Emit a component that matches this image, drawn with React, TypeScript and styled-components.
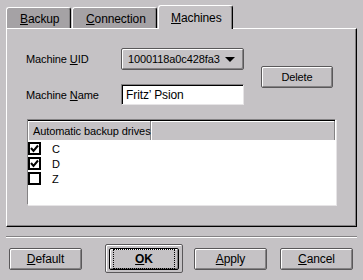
import * as React from 'react';
import styled, { createGlobalStyle } from 'styled-components';

const GlobalStyle = createGlobalStyle`
  html, body {
    margin: 0;
    padding: 0;
    background: #c5c2c5;
  }
`;

const Window = styled.div`
  width: 363px;
  height: 280px;
  background: #c5c2c5;
  font-family: 'Liberation Sans', Arial, sans-serif;
  font-size: 11px;
  letter-spacing: -0.1px;
  color: #000;
  overflow: hidden;
`;

const TabBar = styled.div`
  display: flex;
  align-items: flex-end;
  height: 28px;
  padding-left: 6px;
  gap: 1px;
  box-sizing: border-box;
`;

const Tab = styled.div<{ $active?: boolean; $width: number }>`
  position: relative;
  z-index: ${({ $active }) => ($active ? 1 : 0)};
  box-sizing: border-box;
  width: ${({ $width }) => $width}px;
  height: ${({ $active }) => ($active ? 24 : 21)}px;
  margin-bottom: ${({ $active }) => ($active ? -1 : 0)}px;
  background: ${({ $active }) => ($active ? '#c5c2c5' : '#a5a2a5')};
  border-top: 1px solid #fff;
  border-left: 1px solid #fff;
  border-right: 1px solid #000;
  border-radius: 3px 3px 0 0;
  box-shadow: inset -1px 0 0 #848284;
  display: flex;
  align-items: center;
  font-size: 12px;
  padding-left: ${({ $active }) => ($active ? 12 : 13)}px;
  padding-top: ${({ $active }) => ($active ? 0 : 1)}px;
`;

const Panel = styled.div`
  box-sizing: border-box;
  margin: 0 6px;
  height: 199px;
  border-top: 1px solid #fff;
  border-left: 1px solid #fff;
  border-right: 1px solid #000;
  border-bottom: 1px solid #000;
  box-shadow: inset -1px -1px 0 #848284;
  padding: 19px 0 0 19px;
`;

const Form = styled.div`
  display: grid;
  grid-template-columns: 95px 123px auto;
  grid-template-rows: 22px 21px;
  row-gap: 14px;
  align-items: center;
`;

const Label = styled.div`
  white-space: nowrap;
`;

const Combo = styled.div`
  box-sizing: border-box;
  height: 22px;
  border: 1px solid #5a585a;
  border-radius: 2px;
  box-shadow: inset 1px 1px 0 #fff, inset -1px -1px 0 #848284;
  display: flex;
  align-items: center;
  justify-content: space-between;
  padding: 0 8px 0 6px;
`;

const Arrow = styled.span`
  width: 0;
  height: 0;
  border-left: 5px solid transparent;
  border-right: 5px solid transparent;
  border-top: 5px solid #000;
`;

const TextInput = styled.div`
  box-sizing: border-box;
  height: 21px;
  background: #fff;
  border-top: 1px solid #848284;
  border-left: 1px solid #848284;
  border-right: 1px solid #e6e4e6;
  border-bottom: 1px solid #e6e4e6;
  box-shadow: inset 1px 1px 0 #000;
  display: flex;
  align-items: center;
  padding-left: 4px;
  font-size: 12px;
`;

const Button = styled.div<{ $width?: number }>`
  box-sizing: border-box;
  width: ${({ $width }) => $width ?? 73}px;
  height: 22px;
  border: 1px solid #5a585a;
  border-radius: 2px;
  box-shadow: inset 1px 1px 0 #fff, inset -1px -1px 0 #848284;
  display: flex;
  align-items: center;
  justify-content: center;
  font-size: 12px;
`;

const DeleteButton = styled(Button)`
  grid-column: 3;
  grid-row: 1 / 3;
  margin-left: 17px;
  font-size: 11px;
`;

const ListBox = styled.div`
  box-sizing: border-box;
  margin: 14px 0 0 1px;
  width: 309px;
  height: 86px;
  background: #fff;
  border-top: 1px solid #848284;
  border-left: 1px solid #848284;
  border-right: 1px solid #fff;
  border-bottom: 1px solid #fff;
  box-shadow: 1px 1px 0 #e6e4e6;
`;

const ListHeader = styled.div`
  display: flex;
  height: 20px;
  background: #c5c2c5;
  border-top: 1px solid #000;
  box-sizing: border-box;
`;

const HeaderCell = styled.div<{ $width?: number }>`
  box-sizing: border-box;
  width: ${({ $width }) => ($width ? `${$width}px` : 'auto')};
  flex: ${({ $width }) => ($width ? 'none' : 1)};
  border-right: 1px solid #848284;
  box-shadow: inset 1px 1px 0 #fff;
  display: flex;
  align-items: center;
  padding-left: 5px;
  white-space: nowrap;
`;

const Rows = styled.div`
  padding-top: 2px;
  display: flex;
  flex-direction: column;
  gap: 2px;
`;

const Row = styled.div`
  display: flex;
  align-items: center;
  height: 13px;
`;

const CheckBox = styled.div`
  box-sizing: border-box;
  width: 13px;
  height: 13px;
  border: 2px solid #000;
  background: #fff;
  display: flex;
  align-items: center;
  justify-content: center;
  margin-right: 11px;
`;

const Separator = styled.div`
  margin: 9px 6px 0;
  height: 1px;
  background: #848284;
  border-bottom: 1px solid #fff;
`;

const ButtonRow = styled.div`
  display: flex;
  align-items: center;
  padding: 6px 0 0 9px;
`;

const DefaultFrame = styled.div`
  box-sizing: border-box;
  width: 78px;
  height: 29px;
  margin: 0 11px 0 23px;
  border: 1px solid #5a585a;
  border-radius: 2px;
  box-shadow: inset 1px 1px 0 #fff;
  padding: 3px;
`;

const DefaultButton = styled(Button)`
  border-color: #000;
`;

const FocusRect = styled.span`
  box-sizing: border-box;
  width: 100%;
  height: 100%;
  margin: 3px;
  border: 1px dotted #000;
  display: flex;
  align-items: center;
  justify-content: center;
  font-weight: bold;
`;

const CancelButton = styled(Button)`
  margin-left: 13px;
`;

const Check = () => (
  <svg width="9" height="9" viewBox="0 0 9 9">
    <path d="M1 4 L3.5 7 L8 1.5" stroke="#000" strokeWidth="2" fill="none" />
  </svg>
);

const drives = [
  { name: 'C', checked: true },
  { name: 'D', checked: true },
  { name: 'Z', checked: false },
];

const App = () => (
  <Window>
    <GlobalStyle />
    <TabBar>
      <Tab $width={65}>
        <span>
          <u>B</u>ackup
        </span>
      </Tab>
      <Tab $width={85}>
        <span>
          <u>C</u>onnection
        </span>
      </Tab>
      <Tab $width={75} $active>
        <span>
          <u>M</u>achines
        </span>
      </Tab>
    </TabBar>
    <Panel>
      <Form>
        <Label>
          Machine <u>U</u>ID
        </Label>
        <Combo>
          <span>1000118a0c428fa3</span>
          <Arrow />
        </Combo>
        <DeleteButton $width={72}>Delete</DeleteButton>
        <Label>
          Machine <u>N</u>ame
        </Label>
        <TextInput>Fritz’ Psion</TextInput>
      </Form>
      <ListBox>
        <ListHeader>
          <HeaderCell $width={123}>Automatic backup drives</HeaderCell>
          <HeaderCell />
        </ListHeader>
        <Rows>
          {drives.map((drive) => (
            <Row key={drive.name}>
              <CheckBox>{drive.checked && <Check />}</CheckBox>
              <span>{drive.name}</span>
            </Row>
          ))}
        </Rows>
      </ListBox>
    </Panel>
    <Separator />
    <ButtonRow>
      <Button>
        <span>
          <u>D</u>efault
        </span>
      </Button>
      <DefaultFrame>
        <DefaultButton $width={70}>
          <FocusRect>
            <span>
              <u>O</u>K
            </span>
          </FocusRect>
        </DefaultButton>
      </DefaultFrame>
      <Button>
        <span>
          <u>A</u>pply
        </span>
      </Button>
      <CancelButton>
        <span>
          <u>C</u>ancel
        </span>
      </CancelButton>
    </ButtonRow>
  </Window>
);

export default App;
